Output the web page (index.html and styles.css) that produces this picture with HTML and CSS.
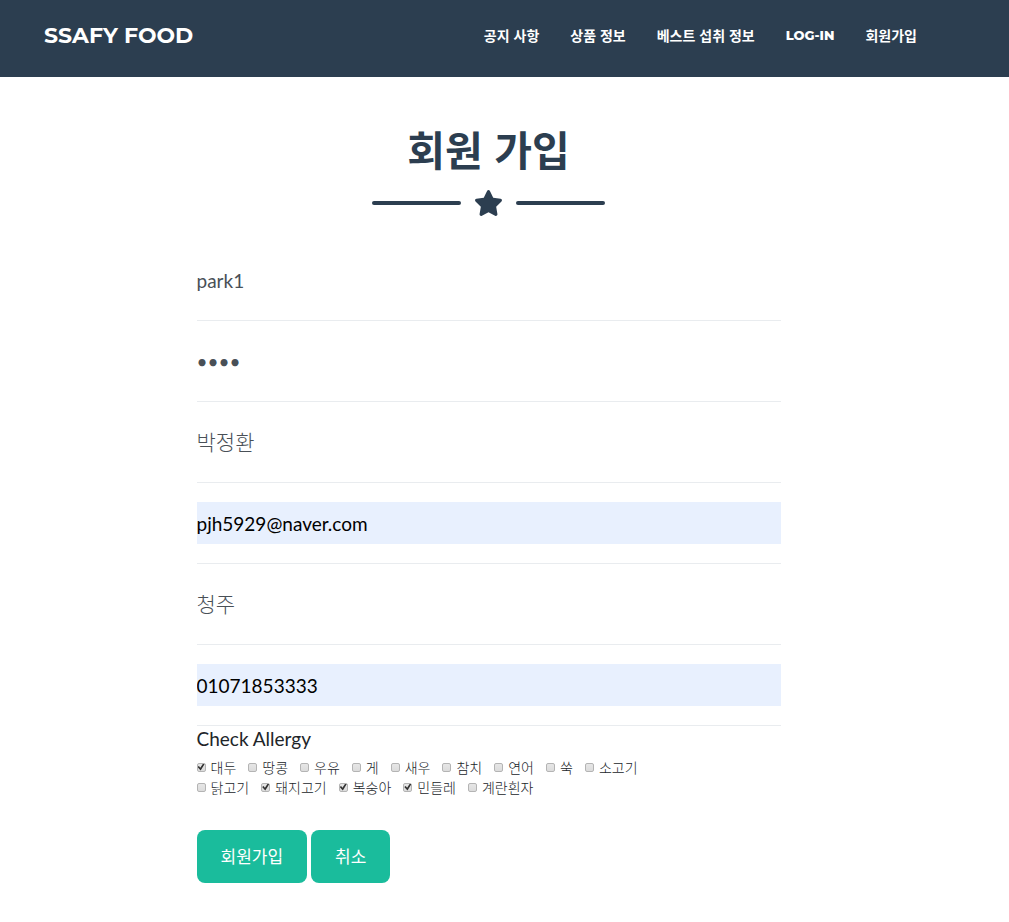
FILE: index.html
```html
<!DOCTYPE html>
<html lang="ko">
<head>
<meta charset="utf-8">
<meta name="viewport" content="width=device-width, initial-scale=1">
<title>SSAFY FOOD - 회원 가입</title>
<link rel="stylesheet" href="styles.css">
</head>
<body>
<header class="navbar">
  <a class="brand" href="#">SSAFY FOOD</a>
  <nav class="menu">
    <a href="#">공지 사항</a>
    <a href="#">상품 정보</a>
    <a href="#">베스트 섭취 정보</a>
    <a class="latin" href="#">LOG-IN</a>
    <a href="#">회원가입</a>
  </nav>
</header>
<main class="page">
  <h1 class="title">회원 가입</h1>
  <div class="divider">
    <span class="line"></span>
    <svg class="star" viewBox="0 0 576 512" aria-hidden="true"><path fill="currentColor" d="M259.3 17.8L194 150.200 47.900 171.500c-26.200 3.800-36.700 36.100-17.700 54.600l105.700 103-25 145.500c-4.500 26.300 23.200 46 46.400 33.700L288 439.600l130.700 68.700c23.200 12.200 50.900-7.400 46.400-33.700l-25-145.500 105.700-103c19-18.500 8.500-50.800-17.700-54.600L382 150.200 316.700 17.800c-11.700-23.600-45.600-23.900-57.400 0z"/></svg>
    <span class="line"></span>
  </div>
  <form class="form">
    <div class="field"><input type="text" aria-label="아이디" value="park1"></div>
    <div class="field"><input type="password" aria-label="비밀번호" value="1234"></div>
    <div class="field"><input class="hangul" type="text" aria-label="이름" value="박정환"></div>
    <div class="field"><input class="filled" type="email" aria-label="이메일" value="pjh5929@naver.com"></div>
    <div class="field"><input class="hangul" type="text" aria-label="주소" value="청주"></div>
    <div class="field"><input class="filled" type="tel" aria-label="전화번호" value="01071853333"></div>
    <fieldset class="allergy">
      <legend>Check Allergy</legend>
      <div class="checks">
        <label><input type="checkbox" checked>대두</label>
        <label><input type="checkbox">땅콩</label>
        <label><input type="checkbox">우유</label>
        <label><input type="checkbox">게</label>
        <label><input type="checkbox">새우</label>
        <label><input type="checkbox">참치</label>
        <label><input type="checkbox">연어</label>
        <label><input type="checkbox">쑥</label>
        <label><input type="checkbox">소고기</label>
      </div>
      <div class="checks">
        <label><input type="checkbox">닭고기</label>
        <label><input type="checkbox" checked>돼지고기</label>
        <label><input type="checkbox" checked>복숭아</label>
        <label><input type="checkbox" checked>민들레</label>
        <label><input type="checkbox">계란흰자</label>
      </div>
    </fieldset>
    <div class="actions">
      <button type="submit">회원가입</button>
      <button type="reset">취소</button>
    </div>
  </form>
</main>
</body>
</html>
```
FILE: styles.css
```css
* {
  box-sizing: border-box;
}

body {
  margin: 0;
  background: #fff;
  color: #212529;
  font-family: Lato, "Noto Sans CJK KR", sans-serif;
}

.navbar {
  display: flex;
  align-items: center;
  justify-content: space-between;
  min-height: 77px;
  padding: 0 92px 8px 44px;
  background: #2c3e50;
}

.navbar a {
  color: #fff;
  text-decoration: none;
}

.brand {
  padding-top: 2px;
  font: 700 22px/32px Montserrat, Inter, sans-serif;
}

.menu {
  display: flex;
  flex-wrap: wrap;
  align-items: center;
  gap: 0 31px;
  font: 700 14px/20px "Noto Sans CJK KR", sans-serif;
}

.menu .latin {
  font: 800 13px/20px Montserrat, Inter, sans-serif;
}

.page {
  padding: 41px 32px 32px 0;
}

.title {
  margin: 0;
  color: #2c3e50;
  font: 700 41px/60px "Noto Sans CJK KR", sans-serif;
  text-align: center;
}

.divider {
  display: flex;
  align-items: center;
  justify-content: center;
  gap: 13px;
  margin: 12px 0 24px;
  color: #2c3e50;
}

.line {
  width: 89px;
  height: 4px;
  border-radius: 4px;
  background: currentColor;
}

.star {
  width: 29px;
  height: 26px;
}

.form {
  width: 60%;
  max-width: 584px;
  margin: 0 auto;
}

.field {
  padding: 19px 0;
  border-bottom: 1px solid #e9ecef;
}

.field input {
  display: block;
  width: 100%;
  height: 42px;
  padding: 0;
  border: 0;
  outline: 0;
  background: #fff;
  color: #495057;
  font: 400 19px/28px Lato, "Noto Sans CJK KR", sans-serif;
}

.field .hangul {
  padding-bottom: 2px;
  font-size: 21px;
  font-weight: 300;
}

.field .filled {
  background: #e8f0fe;
  color: #000;
}

.allergy {
  margin: 0;
  padding: 0;
  border: 0;
}

.allergy legend {
  padding: 0;
  margin-bottom: 5px;
  font-size: 19px;
  line-height: 26px;
}

.checks {
  display: flex;
  flex-wrap: wrap;
  gap: 0 12px;
  font: 300 14px/20px "Noto Sans CJK KR", sans-serif;
}

.checks label {
  display: flex;
  align-items: center;
  gap: 5px;
}

.checks input {
  appearance: none;
  display: grid;
  width: 9px;
  height: 9px;
  margin: 0;
  border: 1px solid #b4b4b4;
  border-radius: 2px;
  background: linear-gradient(#e6e6e6, #dcdcdc);
}

.checks input:checked::after {
  content: "";
  background: #333;
  clip-path: polygon(0 50%, 20% 35%, 40% 60%, 80% 0, 100% 12%, 45% 100%);
}

.actions {
  display: flex;
  gap: 4px;
  margin-top: 33px;
}

.actions button {
  padding: 11px 24px 13px;
  border: 0;
  border-radius: 8px;
  background: #1abc9c;
  color: #fff;
  font: 400 17px/29px "Noto Sans CJK KR", sans-serif;
}
```
